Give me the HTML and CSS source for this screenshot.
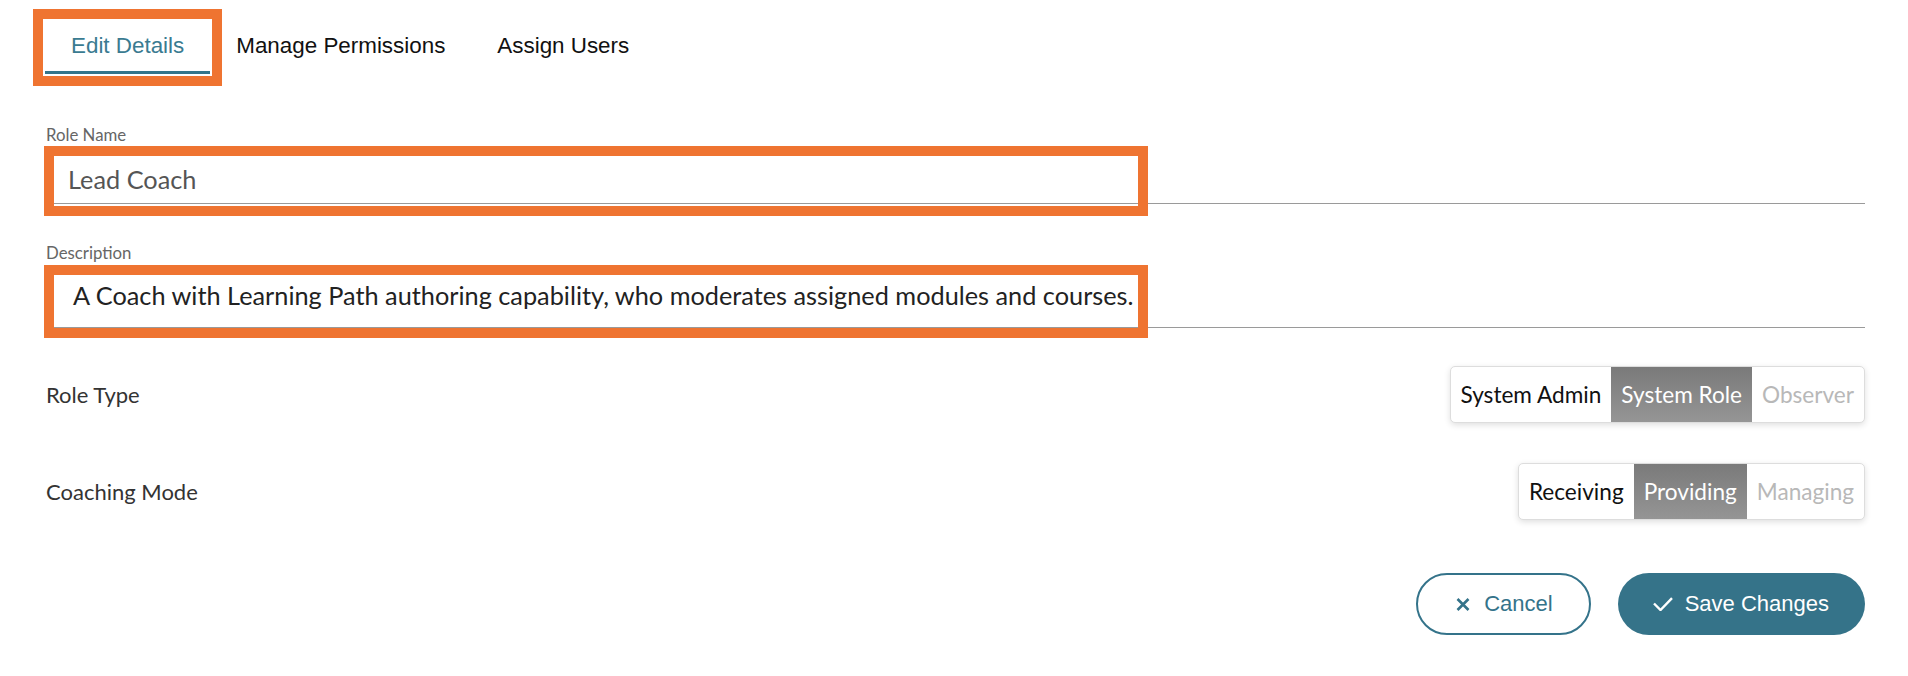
FILE: index.html
```html
<!DOCTYPE html>
<html lang="en">
<head>
<meta charset="utf-8">
<title>Edit Role</title>
<link rel="stylesheet" href="styles.css">
</head>
<body>
<div class="page">
  <nav class="tabs">
    <div class="tab active highlight">Edit Details</div>
    <div class="tab">Manage Permissions</div>
    <div class="tab">Assign Users</div>
  </nav>

  <div class="field first">
    <div class="field-label">Role Name</div>
    <div class="field-input name">Lead Coach<span class="annot annot-name"></span></div>
  </div>

  <div class="field">
    <div class="field-label">Description</div>
    <div class="field-input desc">A Coach with Learning Path authoring capability, who moderates assigned modules and courses.<span class="annot annot-desc"></span></div>
  </div>

  <div class="row row-first">
    <div class="row-label">Role Type</div>
    <div class="seg">
      <div class="seg-item">System Admin</div>
      <div class="seg-item on">System Role</div>
      <div class="seg-item off">Observer</div>
    </div>
  </div>

  <div class="row row-second">
    <div class="row-label">Coaching Mode</div>
    <div class="seg">
      <div class="seg-item">Receiving</div>
      <div class="seg-item on">Providing</div>
      <div class="seg-item off">Managing</div>
    </div>
  </div>

  <div class="actions">
    <button class="btn btn-cancel">
      <svg class="ico-x" width="14" height="13" viewBox="0 0 14 13"><path d="M1.5 1 L12.5 12 M12.5 1 L1.5 12" stroke="#34738a" stroke-width="2.6" fill="none"/></svg>
      <span>Cancel</span>
    </button>
    <button class="btn btn-save">
      <svg class="ico-check" width="20" height="14" viewBox="0 0 20 14"><path d="M1 6.5 L7.5 13 L19 1.2" stroke="#ffffff" stroke-width="2.4" fill="none"/></svg>
      <span>Save Changes</span>
    </button>
  </div>
</div>
</body>
</html>
```

FILE: styles.css
```css
* { box-sizing: border-box; }

html, body {
  margin: 0;
  padding: 0;
  background: #ffffff;
}

.page {
  width: 1908px;
  padding: 21px 43px 0 46px;
  font-family: Lato, "Open Sans", sans-serif;
}

/* Tabs */
.tabs {
  display: flex;
  margin-left: -1px;
}

.tab {
  font-family: "Liberation Sans", Arial, sans-serif;
  font-size: 22.4px;
  color: #111111;
  height: 53px;
  line-height: 49px;
  padding: 0 26px;
  border-bottom: 3px solid transparent;
  white-space: nowrap;
}

.tab.active {
  color: #3a7b91;
  border-bottom-color: #33758b;
}

.tab.highlight {
  outline: 10px solid #ef7431;
  outline-offset: 2px;
}

/* Fields */
.field {
  margin-top: 39px;
}

.field.first {
  margin-top: 51px;
}

.field-label {
  font-size: 16.8px;
  line-height: 19px;
  color: #666666;
}

.field-input {
  position: relative;
  font-size: 25.3px;
  line-height: 30px;
  border-bottom: 1px solid #9a9a9a;
  white-space: nowrap;
}

.field-input.name {
  color: #555555;
  padding: 20px 22px 9px 22px;
}

.field-input.desc {
  color: #222222;
  padding: 18px 27px 17px 27px;
}

.annot {
  position: absolute;
  left: -2px;
  width: 1104px;
  border: 10px solid #ef7431;
  pointer-events: none;
}

.annot-name {
  top: 2px;
  height: 70px;
}

.annot-desc {
  top: 3px;
  height: 73px;
}

/* Segmented rows */
.row {
  display: flex;
  justify-content: space-between;
  align-items: center;
}

.row-first { margin-top: 38px; }
.row-second { margin-top: 40px; }

.row-label {
  font-size: 22px;
  color: #333333;
}

.seg {
  display: flex;
  height: 57px;
  border: 1px solid #dddddd;
  border-radius: 5px;
  overflow: hidden;
  background: #ffffff;
  box-shadow: 0 2px 6px rgba(0, 0, 0, 0.13);
}

.seg-item {
  font-size: 22.6px;
  line-height: 55px;
  padding: 0 10px;
  color: #111111;
  white-space: nowrap;
}

.seg-item.on {
  color: #ffffff;
  background: linear-gradient(#7a7a7a, #959595);
}

.seg-item.off {
  color: #b8b8b8;
}

/* Actions */
.actions {
  display: flex;
  justify-content: flex-end;
  gap: 27px;
  margin-top: 53px;
  padding-right: 0;
}

.btn {
  display: flex;
  align-items: center;
  height: 62px;
  border-radius: 31px;
  font-family: "Liberation Sans", Arial, sans-serif;
  font-size: 22px;
  cursor: pointer;
}

.btn-cancel {
  background: #ffffff;
  color: #34738a;
  border: 2px solid #34738a;
  padding: 0 36px 0 38px;
  gap: 14px;
}

.btn-save {
  background: #357389;
  color: #ffffff;
  border: none;
  padding: 0 36px 0 35px;
  gap: 12px;
}

.btn svg { display: block; }
```
